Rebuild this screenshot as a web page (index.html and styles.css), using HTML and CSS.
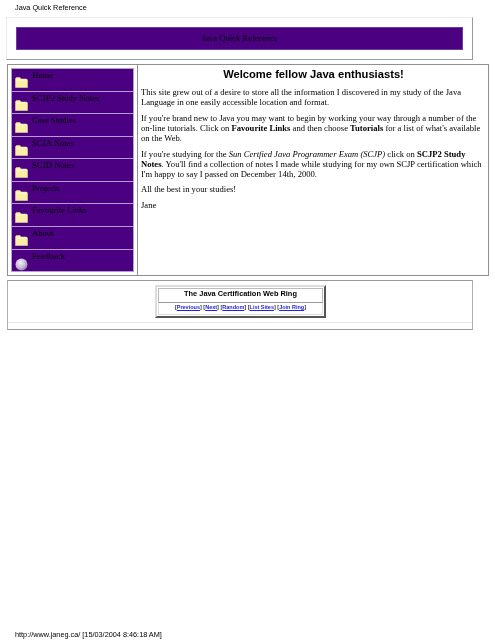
FILE: index.html
```html
<!DOCTYPE html>
<html lang="en">
<head>
<meta charset="utf-8">
<title>Java Quick Reference</title>
<link rel="stylesheet" href="styles.css">
</head>
<body>
<svg class="defs" width="0" height="0" aria-hidden="true">
  <symbol id="folder" viewBox="0 0 13 11">
    <path d="M0.5 10.5V1.5L1.5 0.5H5L6 2H11.5L12.5 3V10.5Z" fill="#fbeea6" stroke="#e4d69a" stroke-width="0.6"/>
    <path d="M1 3H12" stroke="#fff9d8" stroke-width="1"/>
  </symbol>
  <radialGradient id="ball" cx="0.4" cy="0.35" r="0.7">
    <stop offset="0" stop-color="#f4eef8"/>
    <stop offset="0.6" stop-color="#c9b6d6"/>
    <stop offset="1" stop-color="#8f76a8"/>
  </radialGradient>
</svg>
<header class="page-title">Java Quick Reference</header>
<section class="banner-box">
  <div class="banner">Java Quick Reference</div>
</section>
<section class="main-box">
  <div class="side">
    <nav class="menu">
      <a class="item"><span class="label">Home</span><svg class="ico"><use href="#folder"/></svg></a>
      <a class="item"><span class="label">SCJP2 Study Notes</span><svg class="ico"><use href="#folder"/></svg></a>
      <a class="item"><span class="label">Case Studies</span><svg class="ico"><use href="#folder"/></svg></a>
      <a class="item"><span class="label">SCJA Notes</span><svg class="ico"><use href="#folder"/></svg></a>
      <a class="item"><span class="label">SCJD Notes</span><svg class="ico"><use href="#folder"/></svg></a>
      <a class="item"><span class="label">Projects</span><svg class="ico"><use href="#folder"/></svg></a>
      <a class="item"><span class="label">Favourite Links</span><svg class="ico"><use href="#folder"/></svg></a>
      <a class="item"><span class="label">About</span><svg class="ico"><use href="#folder"/></svg></a>
      <a class="item"><span class="label">Feedback</span><svg class="ico ball" viewBox="0 0 13 13"><circle cx="6.5" cy="6.5" r="6" fill="url(#ball)"/></svg></a>
    </nav>
  </div>
  <article class="content">
    <h1>Welcome fellow Java enthusiasts!</h1>
    <p>This site grew out of a desire to store all the information I discovered in my study of the Java Language in one easily accessible location and format.</p>
    <p>If you're brand new to Java you may want to begin by working your way through a number of the on-line tutorials. Click on <b>Favourite Links</b> and then choose <b>Tutorials</b> for a list of what's available on the Web.</p>
    <p>If you're studying for the <i>Sun Certfied Java Programmer Exam (SCJP)</i> click on <b>SCJP2 Study Notes</b>. You'll find a collection of notes I made while studying for my own SCJP certification which I'm happy to say I passed on December 14th, 2000.</p>
    <p>All the best in your studies!</p>
    <p>Jane</p>
  </article>
</section>
<section class="ring-box">
  <div class="ring-area">
    <div class="ring">
      <div class="ring-title">The Java Certification Web Ring</div>
      <div class="ring-links">[<a>Previous</a>] [<a>Next</a>] [<a>Random</a>] [<a>List Sites</a>] [<a>Join Ring</a>]</div>
    </div>
  </div>
  <div class="ring-foot"></div>
</section>
<footer class="page-foot">http://www.janeg.ca/ [15/03/2004 8:46:18 AM]</footer>
</body>
</html>
```
FILE: styles.css
```css
html, body { margin: 0; padding: 0; }
body {
  width: 495px;
  height: 640px;
  position: relative;
  overflow: hidden;
  background: #fff;
  color: #000;
  font-family: "Liberation Serif", serif;
  filter: blur(0.35px);
}
.defs { position: absolute; }
.page-title {
  font: 7.3px/9px "Liberation Sans", sans-serif;
  padding: 3px 0 0 15px;
  height: 14px;
  box-sizing: border-box;
}
.banner-box {
  margin: 3px 0 0 6px;
  width: 467px;
  height: 43px;
  box-sizing: border-box;
  border: 1px solid #ececec;
  border-right-color: #9a9a9a;
  border-bottom-color: #9a9a9a;
  padding: 9px 9px 0 9px;
}
.banner {
  height: 23px;
  background: #4b0082;
  border: 1px solid #6a3d9e;
  box-sizing: border-box;
  font-size: 8.6px;
  line-height: 21px;
  text-align: center;
}
.main-box {
  margin: 4px 0 0 7px;
  width: 482px;
  height: 212px;
  box-sizing: border-box;
  border: 1px solid #8f8f8f;
  display: flex;
}
.side {
  width: 130px;
  box-sizing: border-box;
  flex: none;
  padding: 3px;
  border-right: 1px solid #8f8f8f;
  display: flex;
}
.menu {
  flex: 1;
  background: #b39fcb;
  padding: 1px;
  display: flex;
  flex-direction: column;
  gap: 1px;
}
.item {
  flex: 1;
  min-height: 0;
  background: #4b0082;
  display: block;
  padding: 1px 0 0 3px;
  font-size: 8.6px;
  line-height: 10px;
}
.label { display: block; padding-left: 17px; height: 7px; }
.ico { display: block; width: 13px; height: 11px; }
.ball { height: 13px; }
.content { flex: 1; padding: 2px 2px 0 3px; min-width: 0; }
h1 {
  font: bold 11.2px/14px "Liberation Sans", sans-serif;
  text-align: center;
  margin: 0 0 6px;
}
p {
  margin: 0 0 5.8px;
  font-size: 8.6px;
  line-height: 10px;
}
.ring-box {
  margin: 4px 0 0 7px;
  width: 466px;
  height: 50px;
  box-sizing: border-box;
  border: 1px solid #b0b0b0;
  border-top-color: #9a9a9a;
  border-bottom-color: #9a9a9a;
  display: flex;
  flex-direction: column;
}
.ring-area { height: 41px; padding: 4px 0 0 147px; box-sizing: border-box; }
.ring-foot { flex: 1; border-top: 1px solid #e8e8e8; }
.ring {
  width: 171px;
  height: 33px;
  box-sizing: border-box;
  border: 2px solid #ddd;
  border-right-color: #555;
  border-bottom-color: #555;
  padding: 1px;
  font-family: "Liberation Sans", sans-serif;
  text-align: center;
}
.ring-title {
  height: 15px;
  border: 1px solid #bbb;
  border-bottom-color: #999;
  box-sizing: border-box;
  font: bold 7.4px/10px "Liberation Sans", sans-serif;
}
.ring-links {
  height: 12px;
  border: 1px solid #ddd;
  border-top: 0;
  box-sizing: border-box;
  font-size: 5.5px;
  line-height: 9px;
  font-weight: bold;
  color: #333;
}
.ring-links a { color: #2222dd; text-decoration: underline; }
.page-foot {
  position: absolute;
  left: 15px;
  top: 630px;
  font: 7.3px/9px "Liberation Sans", sans-serif;
}
```
